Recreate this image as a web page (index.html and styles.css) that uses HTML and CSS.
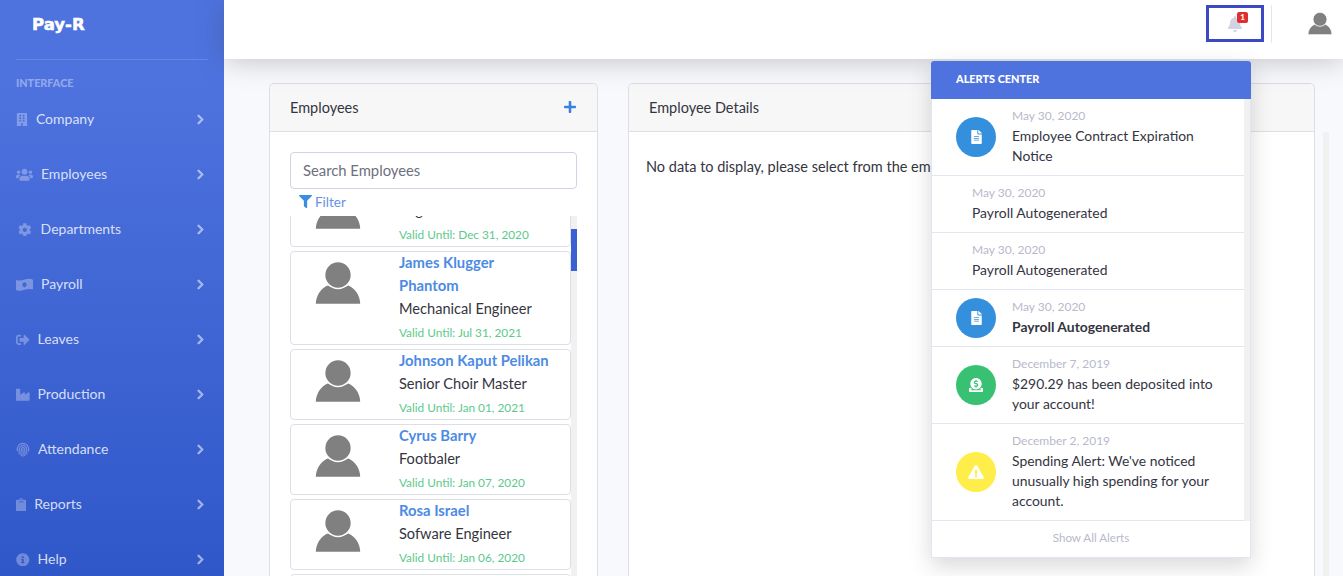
FILE: index.html
```html
<!DOCTYPE html>
<html lang="en">
<head>
    <meta charset="UTF-8">
    <meta name="viewport" content="width=device-width, initial-scale=1.0">
    <title>Pay-R</title>
    <link rel="stylesheet" href="styles.css">
</head>
<body>
    <svg class="icon-defs" width="0" height="0">
        <defs>
            <symbol id="chevron" viewBox="0 0 320 512"><path d="M285.476 272.971L91.132 467.314c-9.373 9.373-24.569 9.373-33.941 0l-22.667-22.667c-9.357-9.357-9.375-24.522-.04-33.901L188.505 256 34.484 101.255c-9.335-9.379-9.317-24.544.04-33.901l22.667-22.667c9.373-9.373 24.569-9.373 33.941 0L285.475 239.03c9.373 9.372 9.373 24.568.001 33.941z"/></symbol>
            <symbol id="person" viewBox="0 0 46 44"><path d="M0 43.5C0 35 5 26.5 13 23.5 C17 27 29 27 33 23.5 C41 26.5 46 35 46 43.5z"/><circle cx="23" cy="14" r="13.4"/></symbol>
            <symbol id="file" viewBox="0 0 384 512"><path d="M224 136V0H24C10.7 0 0 10.7 0 24v464c0 13.3 10.7 24 24 24h336c13.3 0 24-10.7 24-24V160H248c-13.2 0-24-10.8-24-24zm64 236c0 6.6-5.4 12-12 12H108c-6.6 0-12-5.4-12-12v-8c0-6.6 5.4-12 12-12h168c6.6 0 12 5.4 12 12v8zm0-64c0 6.6-5.4 12-12 12H108c-6.6 0-12-5.4-12-12v-8c0-6.6 5.4-12 12-12h168c6.6 0 12 5.4 12 12v8zm0-72v8c0 6.6-5.4 12-12 12H108c-6.6 0-12-5.4-12-12v-8c0-6.6 5.4-12 12-12h168c6.6 0 12 5.4 12 12zm96-114.1v6.1H256V0h6.1c6.4 0 12.5 2.5 17 7l97.9 98c4.5 4.5 7 10.6 7 16.9z"/></symbol>
        </defs>
    </svg>

    <div class="wrapper">
        <aside class="sidebar">
            <div class="brand">Pay-R</div>
            <hr class="side-divider">
            <div class="side-heading">INTERFACE</div>
            <nav class="side-nav">
                <a class="nav-row">
                    <svg class="nav-icon" viewBox="0 0 448 512"><path d="M436 480h-20V24c0-13.255-10.745-24-24-24H56C42.745 0 32 10.745 32 24v456H12c-6.627 0-12 5.373-12 12v20h448v-20c0-6.627-5.373-12-12-12zM128 76c0-6.627 5.373-12 12-12h40c6.627 0 12 5.373 12 12v40c0 6.627-5.373 12-12 12h-40c-6.627 0-12-5.373-12-12V76zm0 96c0-6.627 5.373-12 12-12h40c6.627 0 12 5.373 12 12v40c0 6.627-5.373 12-12 12h-40c-6.627 0-12-5.373-12-12v-40zm52 148h-40c-6.627 0-12-5.373-12-12v-40c0-6.627 5.373-12 12-12h40c6.627 0 12 5.373 12 12v40c0 6.627-5.373 12-12 12zm76 160h-64v-84c0-6.627 5.373-12 12-12h40c6.627 0 12 5.373 12 12v84zm64-172c0 6.627-5.373 12-12 12h-40c-6.627 0-12-5.373-12-12v-40c0-6.627 5.373-12 12-12h40c6.627 0 12 5.373 12 12v40zm0-96c0 6.627-5.373 12-12 12h-40c-6.627 0-12-5.373-12-12v-40c0-6.627 5.373-12 12-12h40c6.627 0 12 5.373 12 12v40zm0-96c0 6.627-5.373 12-12 12h-40c-6.627 0-12-5.373-12-12V76c0-6.627 5.373-12 12-12h40c6.627 0 12 5.373 12 12v40z"/></svg>
                    <span class="nav-label">Company</span>
                    <svg class="nav-chevron"><use href="#chevron"/></svg>
                </a>
                <a class="nav-row">
                    <svg class="nav-icon" viewBox="0 0 640 512"><path d="M96 224c35.3 0 64-28.7 64-64s-28.7-64-64-64-64 28.7-64 64 28.7 64 64 64zm448 0c35.3 0 64-28.7 64-64s-28.7-64-64-64-64 28.7-64 64 28.7 64 64 64zm32 32h-64c-17.6 0-33.5 7.1-45.1 18.6 40.3 22.1 68.9 62 75.1 109.4h66c17.7 0 32-14.3 32-32v-32c0-35.3-28.7-64-64-64zm-256 0c61.9 0 112-50.1 112-112S381.9 32 320 32 208 82.1 208 144s50.1 112 112 112zm76.8 32h-8.3c-20.8 10-43.9 16-68.5 16s-47.6-6-68.5-16h-8.3C179.6 288 128 339.6 128 403.2V432c0 26.5 21.5 48 48 48h288c26.5 0 48-21.5 48-48v-28.8c0-63.6-51.6-115.2-115.2-115.2zm-223.7-13.4C161.5 263.1 145.6 256 128 256H64c-35.3 0-64 28.7-64 64v32c0 17.7 14.3 32 32 32h65.9c6.3-47.4 34.9-87.3 75.2-109.4z"/></svg>
                    <span class="nav-label">Employees</span>
                    <svg class="nav-chevron"><use href="#chevron"/></svg>
                </a>
                <a class="nav-row">
                    <svg class="nav-icon nav-icon-gear" viewBox="0 0 512 512"><path d="M487.4 315.7l-42.6-24.6c4.3-23.2 4.3-47 0-70.2l42.6-24.6c4.9-2.8 7.1-8.6 5.5-14-11.1-35.6-30-67.8-54.7-94.6-3.8-4.1-10-5.1-14.8-2.3L380.8 110c-17.9-15.4-38.5-27.3-60.8-35.1V25.8c0-5.6-3.9-10.5-9.4-11.7-36.7-8.2-74.3-7.8-109.2 0-5.5 1.2-9.4 6.1-9.4 11.7V75c-22.2 7.9-42.8 19.8-60.8 35.1L88.7 85.5c-4.9-2.8-11-1.9-14.8 2.3-24.7 26.7-43.6 58.9-54.7 94.6-1.7 5.4.6 11.2 5.5 14L67.3 221c-4.3 23.2-4.3 47 0 70.2l-42.6 24.6c-4.9 2.8-7.1 8.6-5.5 14 11.1 35.6 30 67.8 54.7 94.6 3.8 4.1 10 5.1 14.8 2.3l42.6-24.6c17.9 15.4 38.5 27.3 60.8 35.1v49.2c0 5.6 3.9 10.5 9.4 11.7 36.7 8.2 74.3 7.8 109.2 0 5.5-1.2 9.4-6.1 9.4-11.7v-49.2c22.2-7.9 42.8-19.8 60.8-35.1l42.6 24.6c4.9 2.8 11 1.9 14.8-2.3 24.7-26.7 43.6-58.9 54.7-94.6 1.5-5.5-.7-11.3-5.6-14.1zM256 336c-44.1 0-80-35.9-80-80s35.9-80 80-80 80 35.9 80 80-35.9 80-80 80z"/></svg>
                    <span class="nav-label">Departments</span>
                    <svg class="nav-chevron"><use href="#chevron"/></svg>
                </a>
                <a class="nav-row">
                    <svg class="nav-icon" viewBox="0 0 640 512"><path d="M621.16 54.46C582.37 38.19 543.55 32 504.75 32c-123.17-.01-246.33 62.34-369.5 62.34-30.89 0-61.76-3.92-92.65-13.72-3.47-1.1-6.95-1.62-10.35-1.62C15.04 79 0 92.32 0 110.81v317.26c0 12.63 7.23 24.6 18.84 29.46C57.63 473.81 96.45 480 135.25 480c123.17 0 246.34-62.35 369.51-62.35 30.89 0 61.76 3.92 92.65 13.72 3.47 1.1 6.95 1.62 10.35 1.62 17.21 0 32.25-13.32 32.25-31.81V83.93c-.01-12.64-7.24-24.6-18.85-29.47zM320 352c-44.19 0-80-42.99-80-96 0-53.02 35.82-96 80-96s80 42.98 80 96c0 53.03-35.83 96-80 96z"/></svg>
                    <span class="nav-label">Payroll</span>
                    <svg class="nav-chevron"><use href="#chevron"/></svg>
                </a>
                <a class="nav-row">
                    <svg class="nav-icon" viewBox="0 0 512 512"><path d="M497 273L329 441c-15 15-41 4.5-41-17v-96H152c-13.3 0-24-10.7-24-24v-96c0-13.3 10.7-24 24-24h136V88c0-21.4 25.9-32 41-17l168 168c9.3 9.4 9.3 24.6 0 34zM192 436v-40c0-6.6-5.4-12-12-12H96c-17.7 0-32-14.3-32-32V160c0-17.7 14.3-32 32-32h84c6.6 0 12-5.4 12-12V76c0-6.6-5.4-12-12-12H96c-53 0-96 43-96 96v192c0 53 43 96 96 96h84c6.6 0 12-5.4 12-12z"/></svg>
                    <span class="nav-label">Leaves</span>
                    <svg class="nav-chevron"><use href="#chevron"/></svg>
                </a>
                <a class="nav-row">
                    <svg class="nav-icon" viewBox="0 0 512 512"><path d="M475.115 163.781L336 252.309v-68.28c0-18.916-20.931-30.399-36.885-20.248L160 252.309V56c0-13.255-10.745-24-24-24H24C10.745 32 0 42.745 0 56v400c0 13.255 10.745 24 24 24h464c13.255 0 24-10.745 24-24V184.029c0-18.917-20.931-30.399-36.885-20.248z"/></svg>
                    <span class="nav-label">Production</span>
                    <svg class="nav-chevron"><use href="#chevron"/></svg>
                </a>
                <a class="nav-row">
                    <svg class="nav-icon nav-icon-print" viewBox="0 0 16 16"><path d="M1.5 9.5C1 4.5 4 1 8 1s7 3.5 6.5 8.5M3.8 13C3 7 4.5 3.3 8 3.3s5 3.7 4.2 9.7M6 15C5.3 9 6 5.6 8 5.6s2.7 3.4 2 9.4M8 7.8c.3 2.500.2 5-.2 7.700"/></svg>
                    <span class="nav-label">Attendance</span>
                    <svg class="nav-chevron"><use href="#chevron"/></svg>
                </a>
                <a class="nav-row">
                    <svg class="nav-icon" viewBox="0 0 384 512"><path d="M384 112v352c0 26.51-21.49 48-48 48H48c-26.51 0-48-21.49-48-48V112c0-26.51 21.49-48 48-48h80c0-35.29 28.71-64 64-64s64 28.71 64 64h80c26.51 0 48 21.49 48 48zM192 40c-13.255 0-24 10.745-24 24s10.745 24 24 24 24-10.745 24-24-10.745-24-24-24m96 114v-20a6 6 0 0 0-6-6H102a6 6 0 0 0-6 6v20a6 6 0 0 0 6 6h180a6 6 0 0 0 6-6z"/></svg>
                    <span class="nav-label">Reports</span>
                    <svg class="nav-chevron"><use href="#chevron"/></svg>
                </a>
                <a class="nav-row">
                    <svg class="nav-icon" viewBox="0 0 512 512"><path d="M256 8C119.043 8 8 119.083 8 256c0 136.997 111.043 248 248 248s248-111.003 248-248C504 119.083 392.957 8 256 8zm0 110c23.196 0 42 18.804 42 42s-18.804 42-42 42-42-18.804-42-42 18.804-42 42-42zm56 254c0 6.627-5.373 12-12 12h-88c-6.627 0-12-5.373-12-12v-24c0-6.627 5.373-12 12-12h12v-64h-12c-6.627 0-12-5.373-12-12v-24c0-6.627 5.373-12 12-12h64c6.627 0 12 5.373 12 12v100h12c6.627 0 12 5.373 12 12v24z"/></svg>
                    <span class="nav-label">Help</span>
                    <svg class="nav-chevron"><use href="#chevron"/></svg>
                </a>
            </nav>
        </aside>

        <div class="main">
            <header class="topbar">
                <div class="bell-box">
                    <svg class="bell-icon" viewBox="0 0 448 512"><path d="M224 512c35.32 0 63.97-28.65 63.97-64H160.03c0 35.35 28.65 64 63.97 64zm215.39-149.71c-19.32-20.76-55.47-51.99-55.47-154.29 0-77.7-54.48-139.9-127.94-155.16V32c0-17.67-14.32-32-31.98-32s-31.98 14.33-31.98 32v20.84C118.56 68.1 64.08 130.3 64.08 208c0 102.3-36.15 133.53-55.47 154.29-6 6.45-8.66 14.16-8.61 21.71.11 16.4 12.98 32 32.1 32h383.8c19.12 0 32-15.6 32.1-32 .05-7.55-2.61-15.27-8.61-21.71z"/></svg>
                    <span class="bell-badge">1</span>
                </div>
                <div class="topbar-divider"></div>
                <svg class="top-user"><use href="#person"/></svg>
            </header>

            <div class="content">
                <section class="card card-employees">
                    <div class="card-header">
                        <span>Employees</span>
                        <svg class="plus-icon" viewBox="0 0 448 512"><path d="M416 208H272V64c0-17.67-14.33-32-32-32h-32c-17.67 0-32 14.33-32 32v144H32c-17.67 0-32 14.33-32 32v32c0 17.67 14.33 32 32 32h144v144c0 17.67 14.33 32 32 32h32c17.67 0 32-14.33 32-32V304h144c17.67 0 32-14.33 32-32v-32c0-17.67-14.33-32-32-32z"/></svg>
                    </div>
                    <div class="card-body">
                        <input class="search-input" type="text" placeholder="Search Employees">
                        <div class="filter-row">
                            <svg class="filter-icon" viewBox="0 0 512 512"><path d="M487.976 0H24.028C2.71 0-8.047 25.866 7.058 40.971L192 225.941V432c0 7.831 3.821 15.17 10.237 19.662l80 55.98C298.02 518.69 320 507.493 320 487.98V225.941l184.947-184.97C520.021 25.896 509.338 0 487.976 0z"/></svg>
                            <span>Filter</span>
                        </div>
                        <div class="list-wrap">
                            <div class="emp-list">
                                <div class="emp-item emp-item-first">
                                    <svg class="emp-photo"><use href="#person"/></svg>
                                    <div class="emp-info">
                                        <div class="emp-name">Maria Santos</div>
                                        <div class="emp-role">Engineer</div>
                                        <div class="emp-valid">Valid Until: Dec 31, 2020</div>
                                    </div>
                                </div>
                                <div class="emp-item">
                                    <svg class="emp-photo"><use href="#person"/></svg>
                                    <div class="emp-info">
                                        <div class="emp-name">James Klugger Phantom</div>
                                        <div class="emp-role">Mechanical Engineer</div>
                                        <div class="emp-valid">Valid Until: Jul 31, 2021</div>
                                    </div>
                                </div>
                                <div class="emp-item">
                                    <svg class="emp-photo"><use href="#person"/></svg>
                                    <div class="emp-info">
                                        <div class="emp-name">Johnson Kaput Pelikan</div>
                                        <div class="emp-role">Senior Choir Master</div>
                                        <div class="emp-valid">Valid Until: Jan 01, 2021</div>
                                    </div>
                                </div>
                                <div class="emp-item">
                                    <svg class="emp-photo"><use href="#person"/></svg>
                                    <div class="emp-info">
                                        <div class="emp-name">Cyrus Barry</div>
                                        <div class="emp-role">Footbaler</div>
                                        <div class="emp-valid">Valid Until: Jan 07, 2020</div>
                                    </div>
                                </div>
                                <div class="emp-item">
                                    <svg class="emp-photo"><use href="#person"/></svg>
                                    <div class="emp-info">
                                        <div class="emp-name">Rosa Israel</div>
                                        <div class="emp-role">Sofware Engineer</div>
                                        <div class="emp-valid">Valid Until: Jan 06, 2020</div>
                                    </div>
                                </div>
                                <div class="emp-item"></div>
                            </div>
                            <div class="list-track"><div class="list-thumb"></div></div>
                        </div>
                    </div>
                </section>

                <section class="card card-details">
                    <div class="card-header">Employee Details</div>
                    <div class="details-body">No data to display, please select from the employee list</div>
                </section>

                <div class="page-track"></div>
            </div>
        </div>
    </div>

    <div class="alerts">
        <div class="alerts-header">ALERTS CENTER</div>
        <div class="alerts-body">
            <div class="alerts-list">
                <div class="alert-item">
                    <div class="alert-circle circle-blue"><svg class="circle-file"><use href="#file"/></svg></div>
                    <div>
                        <div class="alert-date">May 30, 2020</div>
                        <div class="alert-text">Employee Contract Expiration Notice</div>
                    </div>
                </div>
                <div class="alert-item alert-item-plain">
                    <div>
                        <div class="alert-date">May 30, 2020</div>
                        <div class="alert-text">Payroll Autogenerated</div>
                    </div>
                </div>
                <div class="alert-item alert-item-plain">
                    <div>
                        <div class="alert-date">May 30, 2020</div>
                        <div class="alert-text">Payroll Autogenerated</div>
                    </div>
                </div>
                <div class="alert-item">
                    <div class="alert-circle circle-blue"><svg class="circle-file"><use href="#file"/></svg></div>
                    <div>
                        <div class="alert-date">May 30, 2020</div>
                        <div class="alert-text alert-unread">Payroll Autogenerated</div>
                    </div>
                </div>
                <div class="alert-item">
                    <div class="alert-circle circle-green">
                        <svg class="circle-donate" viewBox="0 0 512 512"><path d="M256 416c114.9 0 208-93.1 208-208S370.9 0 256 0 48 93.1 48 208s93.1 208 208 208zM233.8 97.4V80.6c0-9.2 7.4-16.6 16.6-16.6h11.1c9.2 0 16.6 7.4 16.6 16.6v17c15.5.8 30.5 6.1 43 15.4 5.6 4.1 6.2 12.3 1.2 17.1L306 145.6c-3.8 3.7-9.5 3.8-14 1-5.4-3.4-11.4-5.1-17.8-5.1h-38.9c-9 0-16.3 8.2-16.3 18.3 0 8.2 5 15.5 12.1 17.6l62.3 18.7c25.7 7.7 43.7 32.4 43.7 60.1 0 34-26.4 61.5-59.1 62.4v16.8c0 9.2-7.4 16.6-16.6 16.6h-11.1c-9.2 0-16.6-7.4-16.6-16.6v-17c-15.5-.8-30.5-6.1-43-15.4-5.6-4.1-6.2-12.3-1.2-17.1l16.3-15.5c3.8-3.7 9.5-3.8 14-1 5.4 3.4 11.4 5.1 17.8 5.1h38.9c9 0 16.3-8.2 16.3-18.3 0-8.2-5-15.5-12.1-17.6l-62.3-18.7c-25.7-7.7-43.7-32.4-43.7-60.1.1-34 26.4-61.5 59.1-62.4zM480 352h-32.5c-19.6 26-44.6 47.7-73 64h63.8c5.3 0 9.6 3.6 9.6 8v16c0 4.4-4.3 8-9.6 8H73.6c-5.3 0-9.6-3.6-9.6-8v-16c0-4.4 4.3-8 9.6-8h63.8c-28.4-16.3-53.3-38-73-64H32c-17.7 0-32 14.3-32 32v96c0 17.7 14.3 32 32 32h448c17.7 0 32-14.3 32-32v-96c0-17.7-14.3-32-32-32z"/></svg>
                    </div>
                    <div>
                        <div class="alert-date">December 7, 2019</div>
                        <div class="alert-text">$290.29 has been deposited into your account!</div>
                    </div>
                </div>
                <div class="alert-item">
                    <div class="alert-circle circle-yellow">
                        <svg class="circle-warn" viewBox="0 0 576 512"><path d="M569.517 440.013C587.975 472.007 564.806 512 527.94 512H48.054c-36.937 0-59.999-40.055-41.577-71.987L246.423 23.985c18.467-32.009 64.72-31.951 83.154 0l239.94 416.028zM288 354c-25.405 0-46 20.595-46 46s20.595 46 46 46 46-20.595 46-46-20.595-46-46-46zm-43.673-165.346l7.418 136c.347 6.364 5.609 11.346 11.982 11.346h48.546c6.373 0 11.635-4.982 11.982-11.346l7.418-136c.375-6.874-5.098-12.654-11.982-12.654h-63.383c-6.884 0-12.356 5.78-11.981 12.654z"/></svg>
                    </div>
                    <div>
                        <div class="alert-date">December 2, 2019</div>
                        <div class="alert-text">Spending Alert: We've noticed unusually high spending for your account.</div>
                    </div>
                </div>
            </div>
            <div class="alerts-track"></div>
        </div>
        <div class="alerts-footer">Show All Alerts</div>
    </div>
</body>
</html>
```

FILE: styles.css
```css
* {
    box-sizing: border-box;
}

html,
body {
    height: 100%;
}

body {
    margin: 0;
    overflow: hidden;
    font-family: Lato, "Noto Sans", sans-serif;
    font-size: 14.5px;
    color: #34353f;
    background-color: #f8f9fc;
}

.icon-defs {
    display: block;
    height: 0;
}

.wrapper {
    display: flex;
    height: 576px;
    overflow: hidden;
}

/* sidebar */
.sidebar {
    flex: 0 0 224px;
    background: linear-gradient(180deg, #4e73df 10%, #224abe 100%) no-repeat;
    background-size: 100% 810px;
}

.brand {
    height: 59px;
    padding: 14px 0 0 32px;
    font-family: "DejaVu Sans", sans-serif;
    font-size: 16.5px;
    font-weight: 700;
    line-height: 22px;
    color: #fff;
    -webkit-text-stroke: 0.5px #fff;
}

.side-divider {
    height: 1px;
    margin: 0 16px;
    border: 0;
    background-color: rgba(255, 255, 255, 0.15);
}

.side-heading {
    height: 16px;
    margin-top: 15px;
    padding-left: 16px;
    font-size: 10.8px;
    font-weight: 900;
    line-height: 16px;
    color: rgba(255, 255, 255, 0.4);
}

.side-nav {
    margin-top: 1px;
}

.nav-row {
    display: flex;
    align-items: center;
    height: 55px;
    padding: 0 20px 0 16px;
    font-size: 14px;
    color: rgba(255, 255, 255, 0.8);
}

.nav-icon {
    height: 13.6px;
    margin-right: 8px;
    fill: rgba(255, 255, 255, 0.3);
    flex: none;
}

.nav-icon-gear {
    margin: 0 9px 0 2px;
}

.nav-icon-print {
    width: 14px;
    height: 15px;
    fill: none;
    stroke: rgba(255, 255, 255, 0.3);
    stroke-width: 1.4;
    stroke-linecap: round;
}

.nav-label {
    flex: 1;
    padding-bottom: 2px;
}

.nav-chevron {
    width: 7px;
    height: 11px;
    fill: rgba(255, 255, 255, 0.5);
    stroke: rgba(255, 255, 255, 0.5);
    stroke-width: 30px;
    flex: none;
}

/* top bar */
.main {
    flex: 1;
    display: flex;
    flex-direction: column;
    min-width: 0;
}

.topbar {
    position: relative;
    z-index: 2;
    display: flex;
    flex: 0 0 59px;
    justify-content: flex-end;
    align-items: flex-start;
    padding: 5px 11px 0 0;
    background-color: #fff;
    box-shadow: 0 2px 28px rgba(58, 59, 69, 0.28);
}

.bell-box {
    position: relative;
    display: flex;
    justify-content: center;
    align-items: center;
    width: 58px;
    height: 37px;
    border: 3px solid #3d48c4;
}

.bell-icon {
    width: 14px;
    height: 16px;
    fill: #d1d3e2;
}

.bell-badge {
    position: absolute;
    top: 4px;
    left: 28px;
    width: 11px;
    height: 11px;
    border-radius: 2px;
    background-color: #e02d2d;
    color: #fff;
    font-size: 8px;
    font-weight: 900;
    line-height: 11px;
    text-align: center;
}

.topbar-divider {
    width: 1px;
    height: 38px;
    margin-left: 7px;
    background-color: #e3e6f0;
}

.top-user {
    width: 24px;
    height: 23px;
    margin: 7px 0 0 36px;
    fill: #808080;
    stroke: #fff;
    stroke-width: 1.5;
}

/* content */
.content {
    flex: 1;
    display: flex;
    align-items: stretch;
    padding: 24px 14px 0 45px;
    min-height: 0;
}

.card {
    border: 1px solid #dddfe6;
    border-radius: 5px 5px 0 0;
    background-color: #fff;
    height: 560px;
}

.card-employees {
    flex: 0 0 329px;
}

.card-details {
    flex: 0 0 687px;
    margin-left: 30px;
}

.card-header {
    display: flex;
    justify-content: space-between;
    align-items: center;
    height: 48px;
    padding: 0 21px 1px 20px;
    border-bottom: 1px solid #dfdfdf;
    background-color: #f7f7f7;
    border-radius: 5px 5px 0 0;
    font-size: 14.5px;
}

.plus-icon {
    width: 12px;
    height: 14px;
    fill: #3a80dc;
}

.card-body {
    padding: 20px 20px 0;
}

.search-input {
    display: block;
    width: 287px;
    height: 37px;
    padding: 0 12px 1px;
    border: 1px solid #d1d3e2;
    border-radius: 4px;
    font-family: inherit;
    font-size: 14.8px;
    color: #6e707e;
}

.search-input::placeholder {
    color: #6e707e;
    opacity: 1;
}

.filter-row {
    display: flex;
    align-items: center;
    height: 27px;
    padding: 0 0 2px 9px;
    font-size: 13.5px;
    color: #6a8fe8;
}

.filter-icon {
    width: 13px;
    height: 13px;
    margin-right: 3px;
    fill: #3a8ee0;
}

.list-wrap {
    display: flex;
    width: 287px;
    height: 380px;
    overflow: hidden;
}

.emp-list {
    flex: 0 0 281px;
}

.emp-item {
    display: flex;
    min-height: 71px;
    margin-bottom: 4px;
    border: 1px solid #dddfe6;
    border-radius: 4px;
    background-color: #fff;
}

.emp-item-first {
    margin-top: -40px;
}

/* this row is scrolled away, only the descender of its role line shows */
.emp-item-first .emp-role {
    padding-bottom: 1px;
    line-height: 22px;
}

.emp-photo {
    flex: none;
    width: 46px;
    height: 44px;
    margin: 9px 38px 0 24px;
    fill: #808080;
    stroke: #fff;
    stroke-width: 1.5;
}

.emp-info {
    flex: 1;
    min-width: 0;
    margin-top: -1px;
    padding-right: 15px;
    line-height: 23px;
}

.emp-name {
    font-weight: 700;
    color: #4d8be3;
    font-size: 14.8px;
}

.emp-role {
    font-size: 14.6px;
}

.emp-valid {
    margin-top: 1px;
    font-size: 11.8px;
    color: #5dc98c;
}

.list-track {
    flex: 0 0 6px;
    background-color: #f1f1f1;
}

.list-thumb {
    height: 42px;
    margin-top: 13px;
    background-color: #3a60d2;
}

.details-body {
    padding: 25px 17px;
    font-size: 14.5px;
    line-height: 20px;
}

.page-track {
    flex: 0 0 6px;
    height: 520px;
    margin: 49px 0 0 8px;
    background-color: #f1f1f1;
}

/* alerts dropdown */
.alerts {
    position: absolute;
    top: 61px;
    left: 931px;
    z-index: 3;
    width: 320px;
    border: 1px solid #e3e6f0;
    border-top: 0;
    border-radius: 3px 3px 0 0;
    background-color: #fff;
    box-shadow: 0 8px 22px rgba(58, 59, 69, 0.2);
}

.alerts-header {
    height: 38px;
    margin: 0 -1px;
    padding-left: 25px;
    border-radius: 3px 3px 0 0;
    background-color: #4e73df;
    color: #fff;
    font-size: 10.9px;
    font-weight: 900;
    line-height: 36px;
}

.alerts-body {
    display: flex;
}

.alerts-list {
    flex: 1;
}

.alerts-track {
    flex: 0 0 6px;
    background-color: #f1f1f1;
}

.alert-item {
    display: flex;
    align-items: center;
    padding: 8px 24px;
    border-bottom: 1px solid #e3e6f0;
}

.alert-item-plain {
    padding-left: 40px;
}

.alert-circle {
    display: flex;
    flex: none;
    justify-content: center;
    align-items: center;
    width: 40px;
    height: 40px;
    margin-right: 16px;
    border-radius: 50%;
}

.circle-blue {
    background-color: #3490dc;
}

.circle-green {
    background-color: #38c172;
}

.circle-yellow {
    background-color: #ffed4a;
}

.circle-file {
    width: 11px;
    height: 14px;
    fill: #fff;
}

.circle-donate {
    width: 14px;
    height: 14px;
    fill: #fff;
}

.circle-warn {
    width: 16px;
    height: 14px;
    fill: #fff;
}

.alert-date {
    margin-bottom: 1px;
    font-size: 12px;
    line-height: 18px;
    color: #b7b9cc;
}

.alert-text {
    padding-bottom: 1px;
    font-size: 13.9px;
    line-height: 20px;
}

.alert-unread {
    font-weight: 700;
}

.alerts-footer {
    height: 36px;
    padding-bottom: 1px;
    font-size: 11.6px;
    line-height: 34px;
    text-align: center;
    color: #b7b9cc;
}
```
